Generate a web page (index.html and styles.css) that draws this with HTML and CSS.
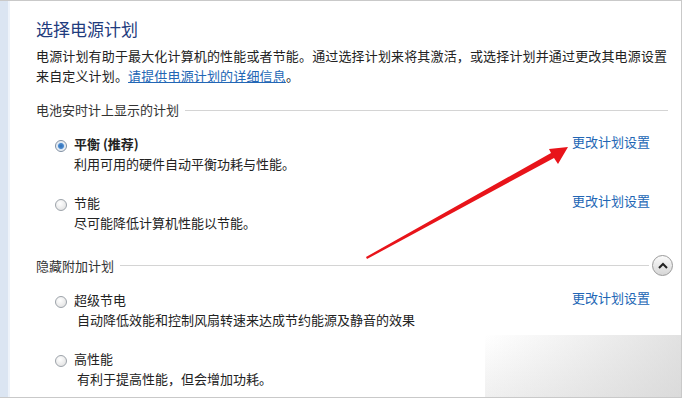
FILE: index.html
```html
<!DOCTYPE html>
<html lang="zh-CN">
<head>
    <meta charset="UTF-8">
    <meta name="viewport" content="width=device-width, initial-scale=1.0">
    <title>选择电源计划</title>
    <link rel="stylesheet" href="styles.css">
</head>
<body>
    <div class="window">
        <div class="sidebar"></div>
        <div class="content">
            <h1 class="title">选择电源计划</h1>
            <p class="intro">电源计划有助于最大化计算机的性能或者节能。通过选择计划来将其激活，或选择计划并通过更改其电源设置<br>来自定义计划。<a href="#">请提供电源计划的详细信息</a>。</p>

            <div class="section-head">
                <span>电池安时计上显示的计划</span>
                <div class="rule"></div>
            </div>
            <div class="plan first">
                <span class="radio checked"></span>
                <div class="plan-text">
                    <div class="plan-name bold">平衡 (推荐)</div>
                    <div class="plan-desc">利用可用的硬件自动平衡功耗与性能。</div>
                </div>
                <a class="change" href="#">更改计划设置</a>
            </div>
            <div class="plan">
                <span class="radio"></span>
                <div class="plan-text">
                    <div class="plan-name">节能</div>
                    <div class="plan-desc">尽可能降低计算机性能以节能。</div>
                </div>
                <a class="change" href="#">更改计划设置</a>
            </div>

            <div class="section-head second">
                <span>隐藏附加计划</span>
                <div class="rule short"></div>
                <button class="collapse" type="button">
                    <svg width="10" height="7" viewBox="0 0 10 7"><path d="M1 6 L5 2 L9 6" fill="none" stroke="#222" stroke-width="2"/></svg>
                </button>
            </div>
            <div class="plan first">
                <span class="radio"></span>
                <div class="plan-text">
                    <div class="plan-name">超级节电</div>
                    <div class="plan-desc indent">自动降低效能和控制风扇转速来达成节约能源及静音的效果</div>
                </div>
                <a class="change" href="#">更改计划设置</a>
            </div>
            <div class="plan">
                <span class="radio"></span>
                <div class="plan-text">
                    <div class="plan-name">高性能</div>
                    <div class="plan-desc indent">有利于提高性能，但会增加功耗。</div>
                </div>
            </div>
        </div>

        <svg class="arrow" width="687" height="399" viewBox="0 0 687 399">
            <polygon points="366,257 551,153 549,149 568,147 558,164 554,158 367,259" fill="#e8141a"/>
        </svg>
        <div class="watermark"></div>
    </div>
</body>
</html>
```

FILE: styles.css
```css
body {
    margin: 0;
    background: #fff;
    font-family: "Noto Sans CJK SC", "Microsoft YaHei", sans-serif;
    color: #222;
}
.window {
    position: relative;
    display: flex;
    width: 682px;
    height: 398px;
    box-sizing: border-box;
    border-top: 1px solid #c9c9c9;
    border-right: 1px solid #c9c9c9;
    border-bottom: 1px solid #c9c9c9;
    overflow: hidden;
}
.sidebar {
    width: 8px;
    flex: none;
    background: #dbe5f2;
    border-right: 2px solid #eef3fa;
}
.content {
    flex: 1;
    padding: 16px 13px 0 26px;
}
.title {
    margin: 0;
    font-size: 17px;
    line-height: 24px;
    font-weight: normal;
    color: #1f3c7e;
}
.intro {
    margin: 5px -8px 0 0;
    font-size: 13px;
    line-height: 20px;
    letter-spacing: 0.15px;
    white-space: nowrap;
}
a {
    color: #2266b5;
}
.section-head {
    display: flex;
    align-items: center;
    margin-top: 14px;
    font-size: 13px;
    line-height: 20px;
    color: #333;
}
.section-head.second {
    margin-top: 22px;
}
.rule {
    flex: 1;
    height: 1px;
    background: #d4d4d4;
    margin-left: 6px;
}
.rule.short {
    margin-right: 3px;
}
.collapse {
    width: 21px;
    height: 21px;
    padding: 0;
    border: 1px solid #9a9a9a;
    border-radius: 50%;
    background: linear-gradient(#fbfbfb, #d6d6d6);
    display: flex;
    align-items: center;
    justify-content: center;
    margin-right: -5px;
}
.plan {
    display: flex;
    align-items: flex-start;
    margin-top: 19px;
    padding: 0 18px 0 19px;
    font-size: 13px;
    line-height: 20px;
}
.plan.first {
    margin-top: 14px;
}
.radio {
    width: 10px;
    height: 10px;
    flex: none;
    margin: 6px 7px 0 0;
    border: 1px solid #9da3aa;
    border-radius: 50%;
    background: radial-gradient(circle at 40% 35%, #fff, #dcdcdc);
    box-sizing: content-box;
}
.radio.checked {
    background: radial-gradient(circle, #2f6fb5 0, #4b8ad0 2.5px, #d9e6f4 3.5px, #f2f2f2 5px);
    border-color: #7f8fa3;
}
.plan-text {
    flex: 1;
}
.bold {
    font-weight: bold;
}
.plan-desc.indent {
    padding-left: 3px;
}
.change {
    text-decoration: none;
    margin-top: -2px;
}
.arrow {
    position: absolute;
    left: 0;
    top: -1px;
    pointer-events: none;
}
.watermark {
    position: absolute;
    left: 485px;
    top: 334px;
    width: 200px;
    height: 64px;
    background: linear-gradient(to right, rgba(255,255,255,0), rgba(200,200,200,0.55)),
                linear-gradient(to bottom, rgba(255,255,255,0.3), rgba(210,210,210,0.35));
    pointer-events: none;
}
```
